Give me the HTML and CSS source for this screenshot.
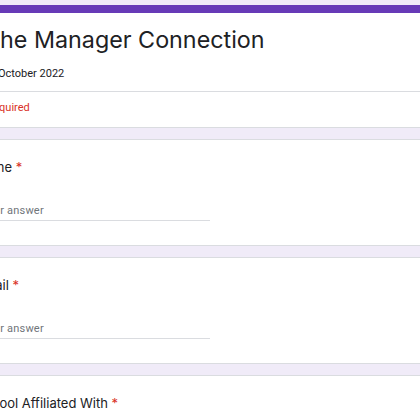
FILE: index.html
```html
<!DOCTYPE html>
<html lang="en">
<head>
<meta charset="utf-8">
<title>The Manager Connection</title>
<link rel="stylesheet" href="styles.css">
</head>
<body>
<main class="form">
  <section class="card header-card">
    <div class="header-top">
      <h1 class="title">The Manager Connection</h1>
      <p class="desc">October 2022</p>
    </div>
    <div class="required-note">* Required</div>
  </section>

  <section class="card question">
    <div class="label">Name <span class="star">*</span></div>
    <div class="answer"><span class="placeholder">Your answer</span></div>
  </section>

  <section class="card question">
    <div class="label">Email <span class="star">*</span></div>
    <div class="answer"><span class="placeholder">Your answer</span></div>
  </section>

  <section class="card question">
    <div class="label">School Affiliated With <span class="star">*</span></div>
    <div class="answer"><span class="placeholder">Your answer</span></div>
  </section>
</main>
</body>
</html>
```
FILE: styles.css
```css
html, body {
  margin: 0;
  padding: 0;
  background: #f0ebf8;
  overflow: hidden;
}

body {
  font-family: Roboto, "Liberation Sans", sans-serif;
  color: #202124;
}

.form {
  width: 640px;
  margin-left: -37px;
  padding-top: 5px;
  display: flex;
  flex-direction: column;
  gap: 11px;
}

.card {
  background: #ffffff;
  border: 1px solid #dadce0;
  border-radius: 8px;
  padding: 0 17px;
}

.header-card {
  border-top: 8px solid #673ab7;
  padding: 0;
}

.header-top {
  padding: 13px 17px 9px 21px;
  border-bottom: 1px solid #dadce0;
}

.title {
  margin: 0;
  font-family: Inter, "Open Sans", sans-serif;
  font-weight: 400;
  font-size: 23.3px;
  line-height: 28px;
  color: #202124;
}

.desc {
  margin: 12px 0 0 13px;
  font-size: 11px;
  line-height: 16px;
}

.required-note {
  padding: 8px 17px 11px 15px;
  font-size: 11px;
  line-height: 16px;
  color: #d93025;
}

.question {
  padding-top: 17px;
  padding-bottom: 24px;
}

.label {
  margin-left: -5px;
  font-family: Inter, "Open Sans", sans-serif;
  font-size: 13px;
  line-height: 20px;
  color: #202124;
}

.star {
  color: #d93025;
}

.answer {
  margin-top: 26px;
  width: 229px;
  padding-bottom: 1px;
  border-bottom: 1px solid #dadce0;
  font-size: 11px;
  line-height: 16px;
}

.placeholder {
  color: #70757a;
  letter-spacing: 0.2px;
}
```
